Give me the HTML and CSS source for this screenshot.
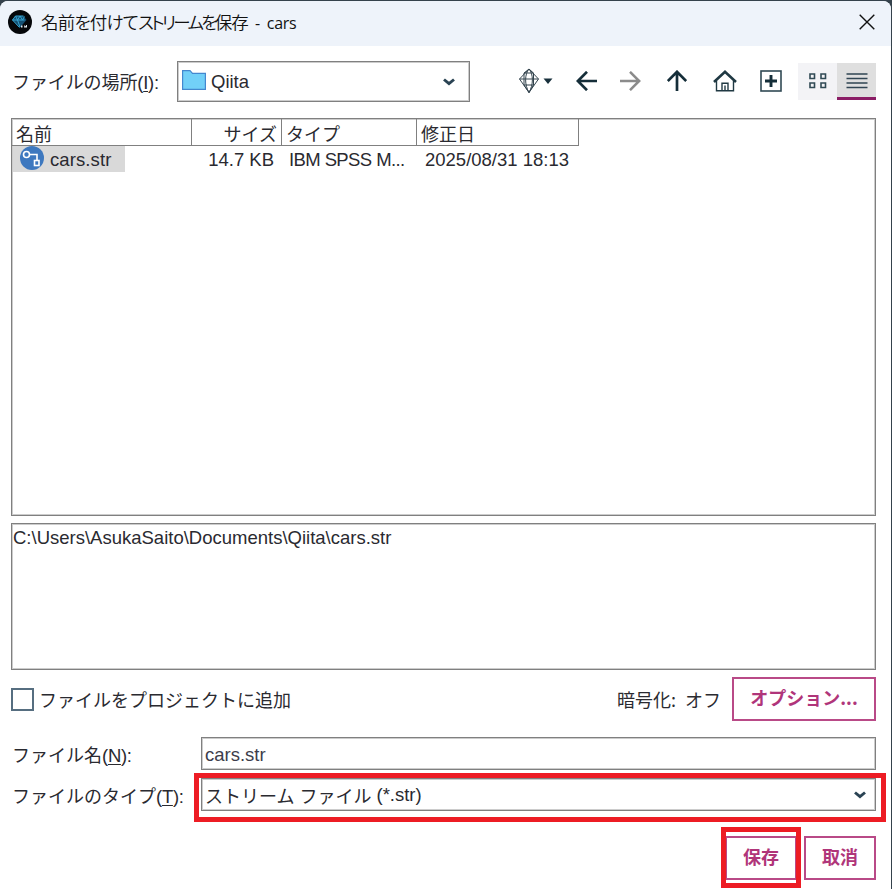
FILE: index.html
```
<!DOCTYPE html>
<html lang="ja">
<head>
  <meta charset="UTF-8" />
  <meta name="viewport" content="width=device-width, initial-scale=1.0" />
  <title>名前を付けてストリームを保存 - cars</title>
  <link rel="stylesheet" href="styles.css">
</head>
<body>
  <div class="dialog">
    <div class="titlebar">
      <svg class="app-icon" viewBox="0 0 24 24" width="24" height="24">
        <circle cx="12" cy="12" r="12" fill="#05070a"/>
        <path d="M7.500 6h8l3 4-6.500 7.500L4.500 10z" fill="#144f72"/>
        <path d="M4.500 10h12M7.500 6L4.500 10l7 7.500M9.500 10l2.500 7M7.500 6l2 4 2.500-4 2.500 4 2-3.500M7.500 6h8" fill="none" stroke="#36a5d2" stroke-width="1"/>
        <path d="M13 15.500h1.500v2H13zM16.500 15l1.500 1.500V15h1v2.500h-3z" fill="#dfe7ec"/>
      </svg>
      <span class="title"><span class="title-ja">名前を付けて<span class="tight">ストリームを</span>保存</span><span class="title-doc">- cars</span></span>
      <svg class="close" viewBox="0 0 16 16" width="16" height="16"><path d="M.7.700l14.600 14.600M15.300.700L.7 15.300" stroke="#111" stroke-width="1.400"/></svg>
    </div>

    <div class="content">
      <div class="toolbar">
        <label class="look-label"><span class="ja look-ja">ファイルの場所</span><span class="key">(<u>I</u>):</span></label>
        <div class="select folder-select">
          <svg viewBox="0 0 24 20" width="24" height="20"><path d="M.6.600h7.400l2.500 2.700h12.900v16.100H.6z" fill="#72d0f8" stroke="#4488cf" stroke-width="1.200"/></svg>
          <span class="folder-name">Qiita</span>
          <svg class="chevron" viewBox="0 0 12 8" width="12" height="8"><path d="M1 1.500L6 5.700l5-4.200" fill="none" stroke="#2a4353" stroke-width="2.900"/></svg>
        </div>
        <div class="tools">
          <svg class="gem" viewBox="0 0 35 26" width="35" height="26">
            <path d="M11 1l9.500 10L11 24.500 1.500 11zM11 1L6 5v12l5 7.500L15.500 17V5zM1.500 11h19M11 1C6.500 6 6.500 17 11 24.500M11 1c4.500 5 4.500 16 0 23.500M6 5h9.500M6 17h9.500" fill="none" stroke="#34454f" stroke-width="1"/>
            <path d="M25.500 10.500h9L30 16z" fill="#18303c"/>
          </svg>
          <svg class="back" viewBox="0 0 22 20" width="22" height="20"><path d="M21 10H2M11 .800L1.800 10l9.200 9.200" fill="none" stroke="#152e39" stroke-width="2.700"/></svg>
          <svg class="forward" viewBox="0 0 22 20" width="22" height="20"><path d="M1 10h19M11 .800L20.200 10 11 19.200" fill="none" stroke="#8b8b8b" stroke-width="2.500"/></svg>
          <svg class="up" viewBox="0 0 20 22" width="20" height="22"><path d="M10 21V2M.8 11L10 1.800l9.200 9.200" fill="none" stroke="#152e39" stroke-width="2.700"/></svg>
          <svg class="home" viewBox="0 0 24 22" width="24" height="22"><path d="M1 12L12 1.800 23 12" fill="none" stroke="#203943" stroke-width="2.600"/><path d="M3.500 11v9.800h17V11M9 20.800v-7.500h6v7.500M12 15.500v5" fill="none" stroke="#203943" stroke-width="1.400"/></svg>
          <svg class="add" viewBox="0 0 22 22" width="22" height="22"><rect x="1" y="1" width="20" height="20" fill="none" stroke="#304954" stroke-width="1.600"/><path d="M11 5v12M5 11h12" stroke="#152e39" stroke-width="2.900"/></svg>
          <div class="views">
            <div class="view">
              <svg viewBox="0 0 18 16" width="18" height="16"><path d="M1 1h4.500v4.500H1zM12 1h4.500v4.500H12zM1 10h4.500v4.500H1zM12 10h4.500v4.500H12z" fill="none" stroke="#304954" stroke-width="1.600"/></svg>
            </div>
            <div class="view active">
              <svg viewBox="0 0 22 16" width="22" height="16"><path d="M.5 1h21M.5 5.500h21M.5 10h21M.5 14.500h21" stroke="#304553" stroke-width="1.500"/></svg>
            </div>
          </div>
        </div>
      </div>

      <div class="list">
        <div class="row head">
          <div class="ja">名前</div>
          <div class="ja size">サイズ</div>
          <div class="ja">タイプ</div>
          <div class="ja">修正日</div>
        </div>
        <div class="row file">
          <div class="name"><div class="selected">
            <svg viewBox="0 0 24 24" width="24" height="24">
              <circle cx="12" cy="12" r="12" fill="#3d78bf"/>
              <circle cx="6.500" cy="8.500" r="3" fill="none" stroke="#fff" stroke-width="1.600"/>
              <path d="M9.500 8.500h7.500v6" fill="none" stroke="#fff" stroke-width="1.600"/>
              <rect x="14.500" y="14.500" width="4.500" height="5" fill="none" stroke="#fff" stroke-width="1.600"/>
            </svg>
            <span>cars.str</span>
          </div></div>
          <div class="size">14.7 KB</div>
          <div class="type">IBM SPSS M...</div>
          <div class="date">2025/08/31 18:13</div>
        </div>
      </div>

      <div class="path-box"><span>C:\Users\AsukaSaito\Documents\Qiita\cars.str</span></div>

      <div class="options">
        <span class="checkbox"></span>
        <span class="ja project">ファイルをプロジェクトに追加</span>
        <span class="ja encrypt">暗号化:</span>
        <span class="ja off">オフ</span>
        <button class="btn option-btn"><span>オプション...</span></button>
      </div>

      <div class="field name-field">
        <label><span class="ja">ファイル名</span><span class="key">(<u>N</u>):</span></label>
        <div class="input">cars.str</div>
      </div>
      <div class="field type-field">
        <label><span class="ja">ファイルのタイプ</span><span class="key">(<u>T</u>):</span></label>
        <div class="input marked">
          <span class="ja type-ja">ストリーム</span><span class="ja type-ja">ファイル</span><span class="ext">(*.str)</span>
          <svg class="chevron" viewBox="0 0 12 8" width="12" height="8"><path d="M1 1.500L6 5.700l5-4.200" fill="none" stroke="#2a4353" stroke-width="2.900"/></svg>
        </div>
      </div>

      <div class="actions">
        <button class="btn marked save"><span>保存</span></button>
        <button class="btn cancel"><span>取消</span></button>
      </div>
    </div>
  </div>
</body>
</html>
```
FILE: styles.css
```
* {
  box-sizing: border-box;
}
body {
  margin: 0;
  height: 889px;
  padding: 1px 1px 0 0;
  overflow: hidden;
  background: #35424c;
  font-family: "Liberation Sans", "Noto Sans CJK JP", sans-serif;
  font-size: 18.5px;
  line-height: 24px;
  color: #2a2a30;
  white-space: nowrap;
}
svg {
  display: block;
  flex: none;
}
.dialog {
  height: 888px;
  background: #fff;
  border-radius: 8px 8px 0 0;
  overflow: hidden;
}
.titlebar {
  height: 45px;
  padding: 0 16px 3px 8px;
  display: flex;
  align-items: center;
  background: #eef3fa;
}
.title {
  margin-left: 9px;
  font-family: "Open Sans", "Noto Sans CJK JP", sans-serif;
  font-size: 16px;
  color: #111;
}
.title-ja {
  font-family: "Noto Sans CJK JP", sans-serif;
  font-size: 17.5px;
  font-weight: 350;
  font-feature-settings: "palt";
  letter-spacing: -0.8px;
}
.tight {
  letter-spacing: -2.7px;
}
.title-doc {
  margin-left: 7px;
  word-spacing: 3px;
  letter-spacing: -0.3px;
}
.close {
  margin-left: auto;
}
.content {
  padding: 15px 15px 0 11px;
}
.ja {
  font-family: "Noto Sans CJK JP", sans-serif;
  font-size: 18px;
  font-weight: 400;
}
.key {
  letter-spacing: -0.3px;
}
.key u {
  text-underline-offset: 2px;
  text-decoration-thickness: 1px;
}
.toolbar {
  display: flex;
  height: 57px;
}
.look-label {
  width: 166px;
  padding: 8px 0 0 1px;
}
.look-ja {
  letter-spacing: -0.1px;
}
.select,
.list,
.path-box,
.input {
  border: 1px solid #808080;
  box-shadow: inset 0 0 0 1px #ccc;
}
.folder-select {
  width: 293px;
  height: 41px;
  display: flex;
  align-items: center;
  padding: 0 14px 3px 4px;
}
.folder-name {
  margin-left: 5px;
  padding-top: 3px;
}
.select .chevron {
  margin-top: 3px;
}
.chevron {
  margin-left: auto;
}
.tools {
  flex: 1;
  display: flex;
  align-items: center;
  height: 40px;
}
.gem { margin-left: 48px; }
.back { margin-left: 23px; }
.forward { margin-left: 21px; }
.up { margin-left: 26px; }
.home { margin-left: 26px; }
.add { margin-left: 23px; }
.views {
  display: flex;
  margin-left: auto;
  height: 37px;
}
.view {
  width: 39px;
  display: flex;
  align-items: center;
  justify-content: center;
  background: #f3f3f6;
}
.view.active {
  background: #dfdfdf;
  border-bottom: 3px solid #8b1d65;
  padding-top: 2px;
}
.list {
  height: 398px;
}
.row {
  display: grid;
  grid-template-columns: 180px 90px 135px 162px;
  width: 567px;
}
.head {
  height: 27px;
  line-height: 26px;
  border-bottom: 1px solid #808080;
}
.head div {
  height: 26px;
  padding: 1px 4px 0;
  border-right: 1px solid #808080;
}
.size {
  text-align: right;
}
.file {
  line-height: 27px;
}
.selected {
  display: flex;
  width: 112px;
  height: 26px;
  margin: 0 0 0 1px;
  padding-left: 7px;
  background: #d9d9d9;
}
.selected span {
  margin-left: 6px;
  letter-spacing: 0.1px;
}
.file .size {
  padding-right: 8px;
}
.type {
  padding-left: 7px;
  letter-spacing: -0.6px;
}
.date {
  padding-left: 8px;
}
.path-box {
  height: 147px;
  margin-top: 7px;
  padding: 2px 1px;
}
.options {
  display: flex;
  align-items: center;
  height: 44px;
  margin-top: 7px;
}
.checkbox {
  width: 23px;
  height: 23px;
  border: 2px solid #566e80;
}
.project {
  margin-left: 5px;
}
.encrypt {
  margin-left: auto;
}
.off {
  margin: 0 11px 0 9px;
}
.btn {
  padding: 0 0 4px;
  height: 44px;
  border: 2px solid #b94a87;
  background: #fff;
  color: #b0357a;
  font-family: "Noto Sans CJK JP", sans-serif;
  font-size: 18px;
  font-weight: 700;
}
.option-btn {
  width: 144px;
}
.field {
  display: flex;
  align-items: center;
  height: 33px;
}
.field label {
  width: 190px;
  padding: 2px 0 0 1px;
}
.input {
  flex: 1;
  height: 33px;
  padding: 5px 9px 0 3px;
}
.name-field {
  margin-top: 16px;
}
.name-field .input {
  color: #3d3d4b;
}
.type-field {
  margin-top: 8px;
}
.type-field .input {
  display: flex;
  padding-top: 4px;
}
.type-field .chevron {
  margin-top: 8px;
}
.type-ja {
  margin-right: 5px;
}
.marked {
  position: relative;
}
/* red highlight frames lie over the controls */
.marked::after {
  content: "";
  position: absolute;
  border: 5px solid #ed1c24;
}
.input.marked::after {
  inset: -6px -11px -12px -8px;
}
.actions {
  display: flex;
  justify-content: flex-end;
  margin-top: 25px;
}
.actions .btn {
  width: 72px;
}
.save {
  margin-right: 7px;
}
.save::after {
  inset: -11px -6px -10px -6px;
}
```
